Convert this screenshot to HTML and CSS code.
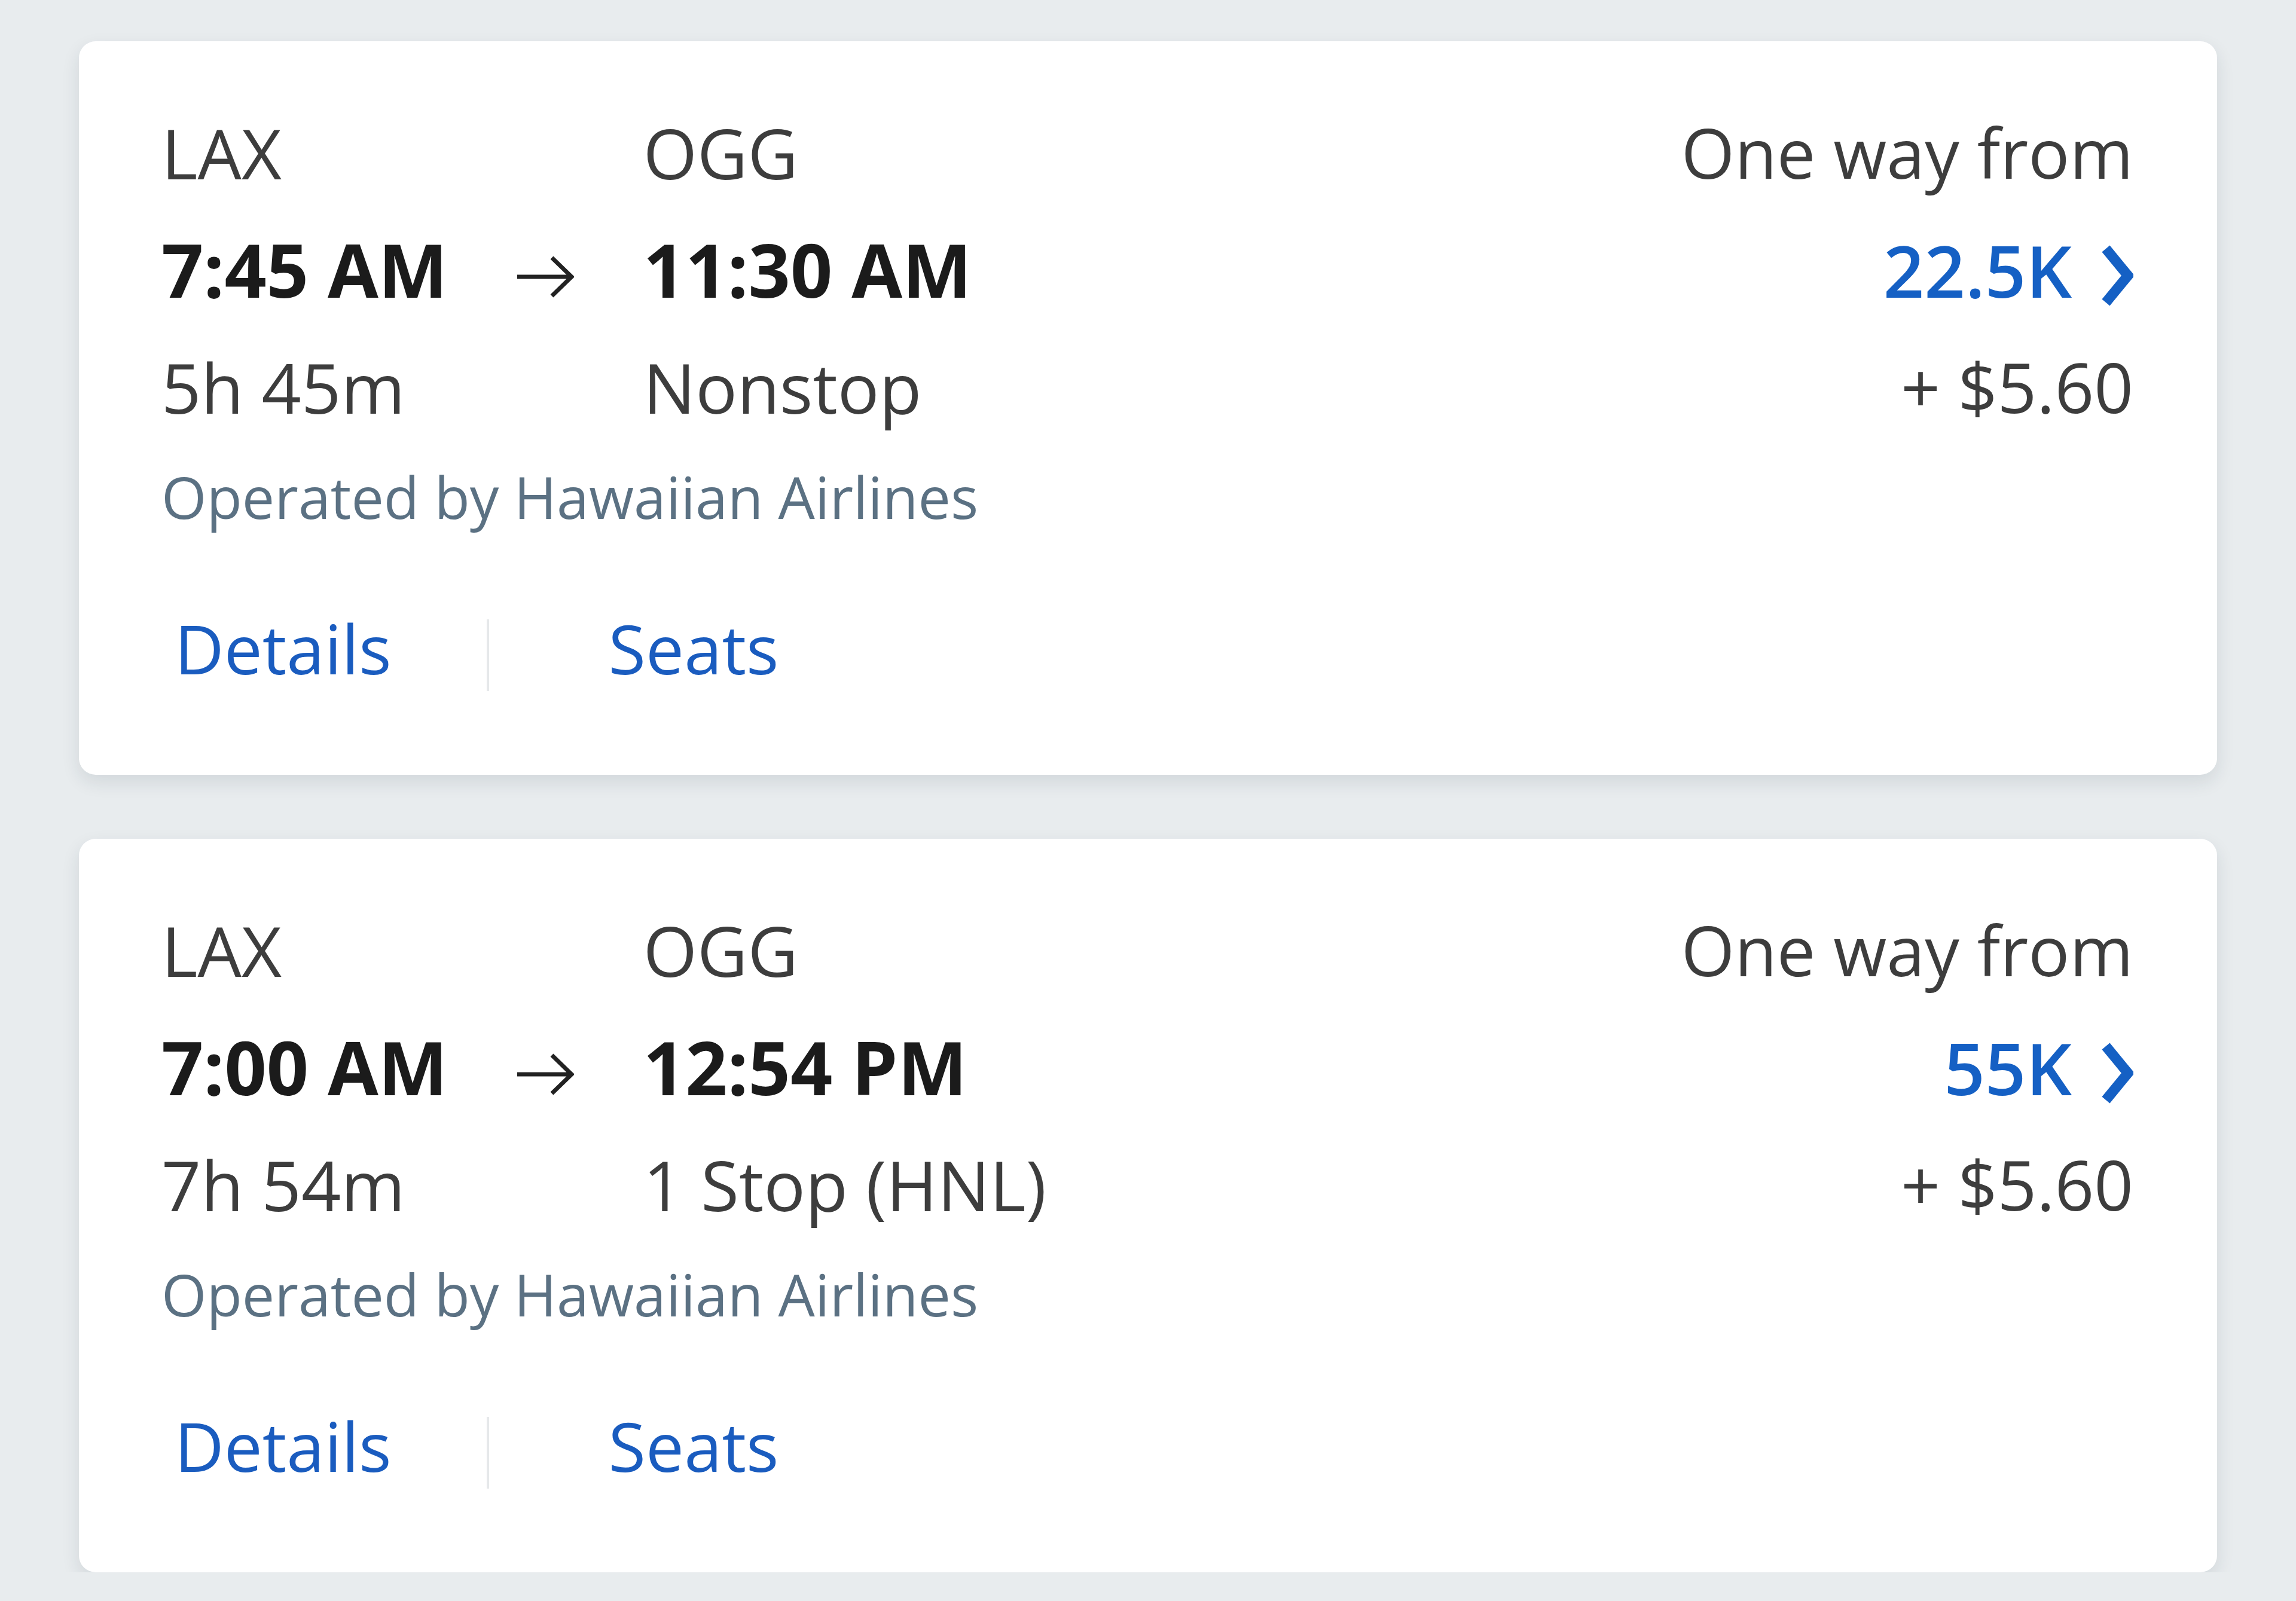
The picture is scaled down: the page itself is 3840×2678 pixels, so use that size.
FILE: index.html
```html
<!DOCTYPE html>
<html lang="en">
<head>
    <meta charset="UTF-8">
    <meta name="viewport" content="width=device-width, initial-scale=1.0">
    <title>Flight results</title>
    <link rel="stylesheet" href="styles.css">
</head>
<body>
    <div class="results">
        <!-- Voo 1 -->
        <div class="card">
            <div class="card-top">
                <div class="route">
                    <span class="code">LAX</span>
                    <span></span>
                    <span class="code">OGG</span>

                    <span class="time">7:45 AM</span>
                    <span class="arrow">
                        <svg width="95" height="72" viewBox="0 0 95 72"><path d="M0 36 H90 M58 4 L91 36 L58 68" fill="none" stroke="#222" stroke-width="7"/></svg>
                    </span>
                    <span class="time">11:30 AM</span>

                    <span class="info">5h 45m</span>
                    <span></span>
                    <span class="info">Nonstop</span>
                </div>
                <div class="fare">
                    <div class="fare-label">One way from</div>
                    <div class="fare-miles">
                        <span>22.5K</span>
                        <svg width="53" height="102" viewBox="0 0 53 102"><path d="M7 6 L44 51 L7 96" fill="none" stroke="#1560c4" stroke-width="17"/></svg>
                    </div>
                    <div class="fare-cash">+ $5.60</div>
                </div>
            </div>
            <div class="operator">Operated by Hawaiian Airlines</div>
            <div class="links">
                <a class="link link-details">Details</a>
                <span class="divider"></span>
                <a class="link link-seats">Seats</a>
            </div>
        </div>

        <!-- Voo 2 -->
        <div class="card">
            <div class="card-top">
                <div class="route">
                    <span class="code">LAX</span>
                    <span></span>
                    <span class="code">OGG</span>

                    <span class="time">7:00 AM</span>
                    <span class="arrow">
                        <svg width="95" height="72" viewBox="0 0 95 72"><path d="M0 36 H90 M58 4 L91 36 L58 68" fill="none" stroke="#222" stroke-width="7"/></svg>
                    </span>
                    <span class="time">12:54 PM</span>

                    <span class="info">7h 54m</span>
                    <span></span>
                    <span class="info">1 Stop (HNL)</span>
                </div>
                <div class="fare">
                    <div class="fare-label">One way from</div>
                    <div class="fare-miles">
                        <span>55K</span>
                        <svg width="53" height="102" viewBox="0 0 53 102"><path d="M7 6 L44 51 L7 96" fill="none" stroke="#1560c4" stroke-width="17"/></svg>
                    </div>
                    <div class="fare-cash">+ $5.60</div>
                </div>
            </div>
            <div class="operator">Operated by Hawaiian Airlines</div>
            <div class="links">
                <a class="link link-details">Details</a>
                <span class="divider"></span>
                <a class="link link-seats">Seats</a>
            </div>
        </div>
    </div>
</body>
</html>
```

FILE: styles.css
```css
/* Geral */
body {
    margin: 0;
    background-color: #e8ecee;
    font-family: 'Open Sans', 'Noto Sans', sans-serif;
    color: #3c3c3c;
}

.results {
    display: flex;
    flex-direction: column;
    gap: 107px;
    padding: 69px 132px 0;
}

/* Cartao do voo */
.card {
    background-color: #fff;
    border-radius: 28px;
    box-shadow: 0 12px 30px rgba(30, 45, 60, 0.11);
    padding: 88px 140px 142px 138px;
}

.card-top {
    display: flex;
    justify-content: space-between;
}

/* Origem -> destino */
.route {
    display: grid;
    grid-template-columns: auto 95px auto;
    column-gap: 116px;
    grid-auto-rows: 196px;
    align-items: center;
}

.code,
.info {
    font-size: 116px;
    line-height: 196px;
    color: #3d3d3d;
}

.time {
    font-size: 123px;
    font-weight: 700;
    line-height: 196px;
    color: #1b1b1b;
}

.arrow {
    display: flex;
    align-items: center;
    margin-top: 24px;
}

/* Preco */
.fare {
    text-align: right;
}

.fare-label,
.fare-cash {
    font-size: 115px;
    line-height: 196px;
    color: #3d3d3d;
}

.fare-miles {
    display: flex;
    justify-content: flex-end;
    align-items: center;
    gap: 50px;
    height: 196px;
    font-size: 120px;
    font-weight: 600;
    color: #1560c4;
}

.fare-miles svg {
    margin-top: 20px;
}

.operator {
    margin-top: 5px;
    font-size: 97px;
    line-height: 160px;
    color: #5b7183;
}

/* Links de baixo */
.links {
    display: flex;
    margin-top: 104px;
    height: 140px;
}

.link {
    font-size: 114px;
    line-height: 140px;
    color: #1a5cbf;
    cursor: pointer;
}

.link-details {
    margin-left: 22px;
    margin-right: 159px;
}

.divider {
    width: 4px;
    height: 120px;
    margin-top: 22px;
    background-color: #e6e8ea;
}

.link-seats {
    margin-left: 200px;
}
```
